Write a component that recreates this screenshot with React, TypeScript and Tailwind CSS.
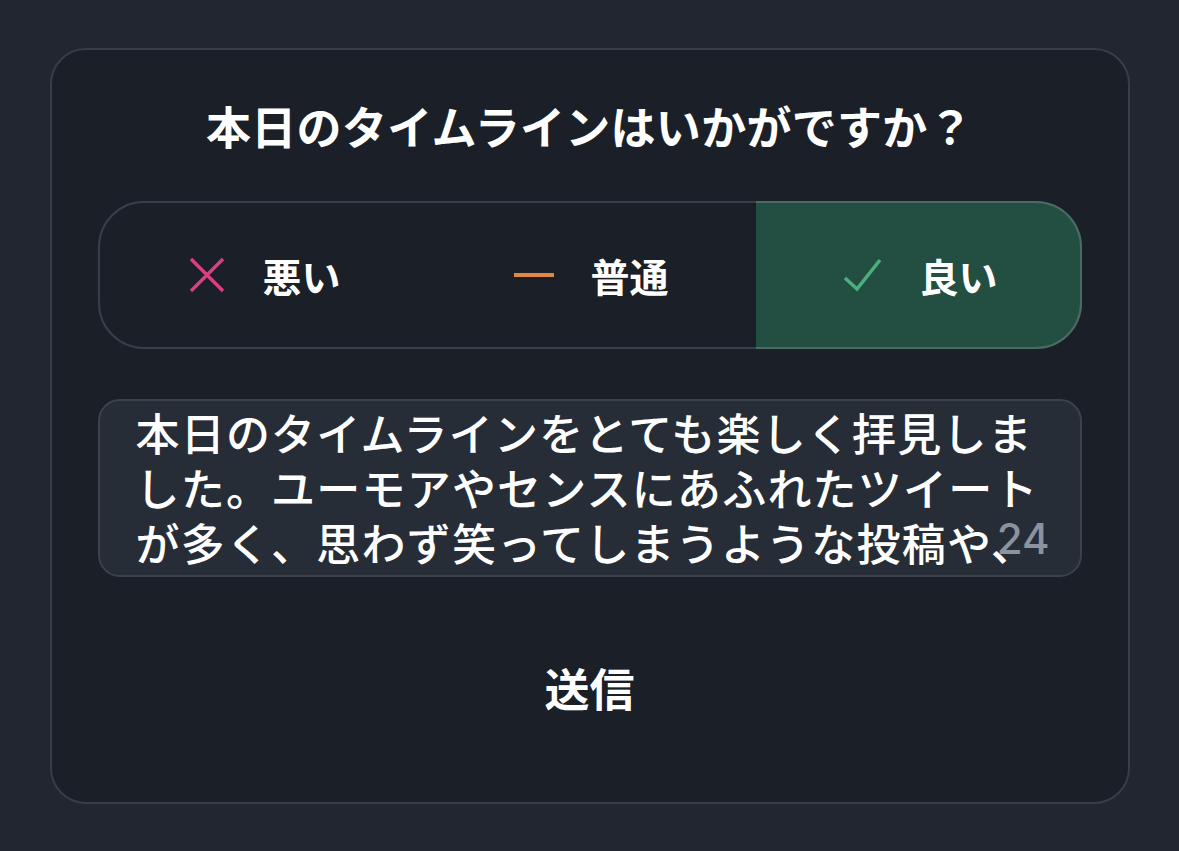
import React from "react";

const font = { fontFamily: '"Noto Sans CJK JP", "Noto Sans", sans-serif' };

function XIcon() {
  return (
    <svg width="38" height="38" viewBox="0 0 38 38" fill="none">
      <path d="M3 3 L35 35 M35 3 L3 35" stroke="#d8407f" strokeWidth="3.5" strokeLinecap="butt" />
    </svg>
  );
}
function MinusIcon() {
  return (
    <svg width="40" height="38" viewBox="0 0 40 38" fill="none">
      <path d="M0 19 H40" stroke="#e4883f" strokeWidth="4" />
    </svg>
  );
}
function CheckIcon() {
  return (
    <svg width="40" height="38" viewBox="0 0 40 38" fill="none">
      <path d="M2 22 L14 33 L37 4" stroke="#4caf7e" strokeWidth="3.5" strokeLinejoin="miter" />
    </svg>
  );
}

export default function App() {
  const lines = [
    "本日のタイムラインをとても楽しく拝見しま",
    "した。ユーモアやセンスにあふれたツイート",
    "が多く、思わず笑ってしまうような投稿や、",
  ];
  return (
    <div className="w-[1179px] h-[851px] bg-[#212630] pt-[48px]" style={font}>
      <div className="mx-auto w-[1080px] h-[756px] rounded-[36px] border-2 border-[#373e48] bg-[#1a1f28] px-[46px] pt-[48px] flex flex-col">
        <div className="text-center text-white font-bold text-[45px] leading-[56px] tracking-[0.3px]">
          本日のタイムラインはいかがですか？
        </div>
        <div className="mt-[47px] flex h-[148px] rounded-[46px] border-2 border-[#383f49]">
          <div className="w-[328px] flex items-center justify-center">
            <div className="flex items-center gap-[36px] ml-[2px]">
              <XIcon />
              <span className="text-white font-bold text-[39px] leading-none">悪い</span>
            </div>
          </div>
          <div className="w-[328px] flex items-center justify-center">
            <div className="flex items-center gap-[36px]">
              <MinusIcon />
              <span className="text-white font-bold text-[39px] leading-none">普通</span>
            </div>
          </div>
          <div className="flex-1 -my-[2px] -mr-[2px] border-2 border-l-0 border-[#4b6c63] rounded-r-[46px] bg-[#234f43] flex items-center justify-center">
            <div className="flex items-center gap-[36px] ml-[6px]">
              <CheckIcon />
              <span className="text-white font-bold text-[39px] leading-none">良い</span>
            </div>
          </div>
        </div>
        <div className="relative mt-[50px] h-[178px] rounded-[22px] border-2 border-[#3b424d] bg-[#262d37] overflow-hidden pl-[36px] pt-[4px]">
          {lines.map((l) => (
            <div key={l} className="text-white font-medium text-[44px] leading-[55px] whitespace-nowrap tracking-[1.2px]">
              {l}
            </div>
          ))}
          <div
            className="absolute right-[30px] bottom-[15px] text-[42px] leading-none font-medium text-[#8a94a0]"
            style={{ fontFamily: 'Inter, "Liberation Sans", Arial, sans-serif' }}
          >
            24
          </div>
        </div>
        <div className="mt-[85px] text-center text-white font-bold text-[45px] leading-[52px]">送信</div>
      </div>
    </div>
  );
}
